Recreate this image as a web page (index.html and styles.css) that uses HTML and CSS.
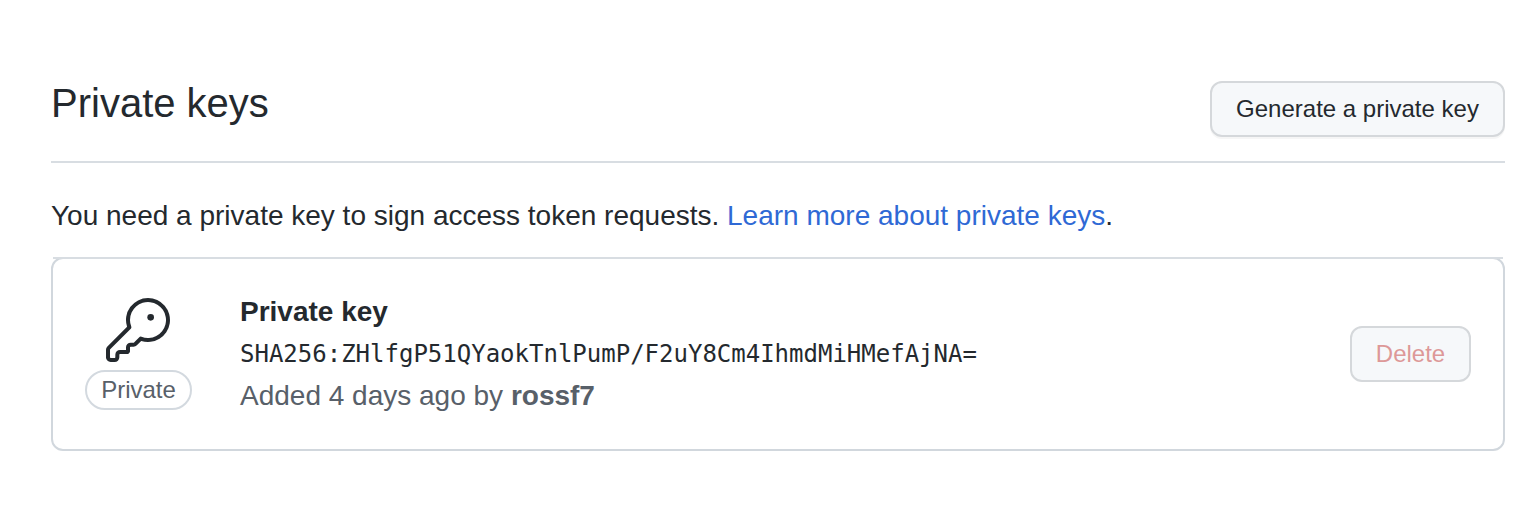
FILE: index.html
```html
<!DOCTYPE html>
<html lang="en">
<head>
<meta charset="utf-8">
<title>Private keys</title>
<link rel="stylesheet" href="styles.css">
</head>
<body>
<main class="page">
  <header class="subhead">
    <h2 class="subhead-title">Private keys</h2>
    <button class="btn btn-generate" type="button">Generate a private key</button>
  </header>
  <p class="intro">You need a private key to sign access token requests. <a class="link" href="#">Learn more about private keys</a>.</p>
  <section class="key-card">
    <div class="key-kind">
      <svg class="key-icon" viewBox="0 0 24 24" aria-hidden="true">
        <path d="M16.75 8.5a1.25 1.25 0 100-2.5 1.25 1.25 0 000 2.5z"/>
        <path fill-rule="evenodd" d="M15.75 0a8.25 8.25 0 00-7.851 10.79L.513 18.178A1.75 1.75 0 000 19.414v2.836C0 23.217.784 24 1.75 24h1.5A1.75 1.75 0 005 22.25v-1a.25.25 0 01.25-.25h2.735a.75.75 0 00.545-.22l.214-.213A.875.875 0 009 19.948V18.5a.25.25 0 01.25-.25h1.086c.464 0 .91-.184 1.237-.513l1.636-1.636A8.25 8.25 0 1015.75 0zM9 8.25a6.75 6.75 0 114.288 6.287.75.75 0 00-.804.168l-1.971 1.972a.25.25 0 01-.177.073H9.25A1.75 1.75 0 007.5 18.5v1H5.25a1.75 1.75 0 00-1.75 1.75v1a.25.25 0 01-.25.25h-1.5a.25.25 0 01-.25-.25v-2.836a.25.25 0 01.073-.177l7.722-7.721a.75.75 0 00.168-.804A6.73 6.73 0 019 8.25z"/>
      </svg>
      <span class="label">Private</span>
    </div>
    <div class="key-info">
      <strong class="key-name">Private key</strong>
      <code class="key-hash">SHA256:ZHlfgP51QYaokTnlPumP/F2uY8Cm4IhmdMiHMefAjNA=</code>
      <span class="key-meta">Added 4 days ago by <strong>rossf7</strong></span>
    </div>
    <button class="btn btn-delete" type="button" disabled>Delete</button>
  </section>
</main>
</body>
</html>
```

FILE: styles.css
```css
* {
  box-sizing: border-box;
}

body {
  margin: 0;
  background: #fff;
  color: #24292e;
  font: 28px/42px "Liberation Sans", Arial, sans-serif;
}

.page {
  padding: 81px 33px 0 51px;
}

.subhead {
  display: flex;
  align-items: flex-start;
  justify-content: space-between;
  height: 82px;
  border-bottom: 2px solid #d8dde2;
}

.subhead-title {
  margin: -8px 0 0;
  font-size: 40px;
  font-weight: 400;
  line-height: 60px;
}

.btn {
  height: 56px;
  padding: 0;
  border: 2px solid #d5d8db;
  border-radius: 12px;
  background: #f6f8fa;
  color: #24292e;
  font: 24px/40px "Liberation Sans", Arial, sans-serif;
  text-align: center;
}

.btn-generate {
  width: 295px;
  box-shadow: 0 2px 0 rgba(27, 31, 35, 0.04);
}

.btn-delete {
  width: 121px;
  margin-left: auto;
  color: #dd9898;
}

.intro {
  margin: 32px 0 20px;
}

.link {
  color: #2f69d5;
  text-decoration: none;
}

.key-card {
  position: relative;
  display: flex;
  align-items: center;
  height: 194px;
  padding: 0 32px;
  border: 2px solid #d1d7dd;
  border-radius: 12px;
}

/* Row divider that runs square over the rounded top corners */
.key-card::before {
  content: "";
  position: absolute;
  top: -2px;
  right: 0;
  left: 0;
  height: 2px;
  background: #d8dde2;
}

.key-kind {
  display: flex;
  flex-direction: column;
  gap: 8px;
  width: 107px;
}

.key-icon {
  width: 64px;
  height: 64px;
  margin-left: 21px;
  fill: #24292e;
}

.label {
  width: 107px;
  height: 40px;
  border: 2px solid #d3d9df;
  border-radius: 20px;
  color: #586069;
  font-size: 24px;
  line-height: 36px;
  text-align: center;
}

.key-info {
  display: flex;
  flex-direction: column;
  margin-left: 48px;
}

.key-hash {
  padding-top: 1px;
  font: 24px/41px "DejaVu Sans Mono", monospace;
}

.key-meta {
  color: #586069;
}
```
